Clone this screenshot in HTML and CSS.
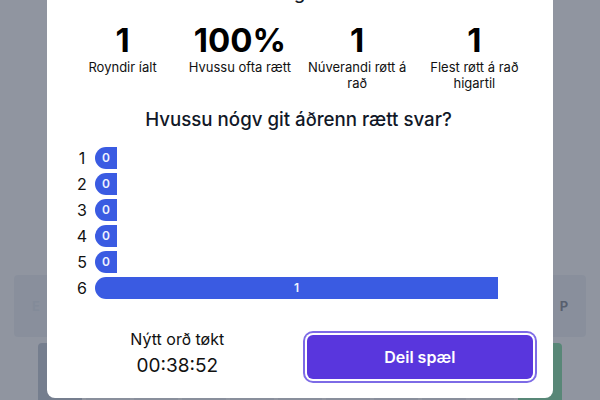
FILE: index.html
```html
<!DOCTYPE html>
<html lang="fo">
<head>
<meta charset="utf-8">
<meta name="viewport" content="width=device-width, initial-scale=1.0">
<title>Orðlið</title>
<link rel="stylesheet" href="styles.css">
</head>
<body>
<div class="keyboard">
  <div class="krow">
    <div class="key">E</div><div class="key">R</div><div class="key">T</div><div class="key">Y</div>
    <div class="key">U</div><div class="key">I</div><div class="key">O</div><div class="key">Ð</div>
    <div class="key">Á</div><div class="key">Í</div><div class="key">Ó</div><div class="key">P</div>
  </div>
  <div class="krow">
    <div class="key key-dark">A</div><div class="key">S</div><div class="key">D</div><div class="key">F</div>
    <div class="key">G</div><div class="key">H</div><div class="key">J</div><div class="key">K</div>
    <div class="key">L</div><div class="key">Æ</div><div class="key key-green">Ø</div>
  </div>
</div>

<div class="overlay">
  <div class="modal">
    <h3 class="title">Hagtøl</h3>

    <div class="stats">
      <div class="stat"><div class="stat-num">1</div><div class="stat-lbl">Royndir íalt</div></div>
      <div class="stat"><div class="stat-num">100%</div><div class="stat-lbl">Hvussu ofta rætt</div></div>
      <div class="stat"><div class="stat-num">1</div><div class="stat-lbl">Núverandi røtt á rað</div></div>
      <div class="stat"><div class="stat-num">1</div><div class="stat-lbl">Flest røtt á rað higartil</div></div>
    </div>

    <h4 class="subtitle">Hvussu nógv git áðrenn rætt svar?</h4>

    <div class="hist">
      <div class="hrow"><div class="hnum">1</div><div class="bar" style="width:22px">0</div></div>
      <div class="hrow"><div class="hnum">2</div><div class="bar" style="width:22px">0</div></div>
      <div class="hrow"><div class="hnum">3</div><div class="bar" style="width:22px">0</div></div>
      <div class="hrow"><div class="hnum">4</div><div class="bar" style="width:22px">0</div></div>
      <div class="hrow"><div class="hnum">5</div><div class="bar" style="width:22px">0</div></div>
      <div class="hrow"><div class="hnum">6</div><div class="bar" style="width:403px">1</div></div>
    </div>

    <div class="foot">
      <div class="next">
        <div class="next-lbl">Nýtt orð tøkt</div>
        <div class="next-time">00:38:52</div>
      </div>
      <button class="share">Deil spæl</button>
    </div>
  </div>
</div>
</body>
</html>
```

FILE: styles.css
```css
html, body {
  margin: 0;
  height: 400px;
  overflow: hidden;
  background: #fff;
  font-family: Inter, "Noto Sans", sans-serif;
  color: #111827;
}

/* keyboard behind the dialog */
.keyboard { padding-top: 275px; }
.krow {
  display: flex;
  justify-content: center;
  gap: 4px;
  margin-bottom: 6px;
}
.key {
  width: 44px;
  height: 62px;
  border-radius: 4px;
  background: #e2e8f0;
  color: #1e293b;
  font-size: 13px;
  font-weight: 700;
  display: flex;
  align-items: center;
  justify-content: center;
}
.key:first-child { color: #cbd5e1; }
.key-dark { background: #94a3b8; }
.key-green { background: #22c55e; color: #fff; }

/* dialog */
.overlay {
  position: fixed;
  inset: 0;
  background: rgba(107, 114, 128, 0.75);
  display: flex;
  justify-content: center;
  align-items: flex-start;
}
.modal {
  width: 506px;
  box-sizing: border-box;
  margin-top: -21px;
  padding: 0 20px 17px 17px;
  background: #fff;
  border-radius: 8px;
}
.title {
  margin: 0;
  font-size: 18px;
  line-height: 28px;
  font-weight: 500;
  text-align: center;
  color: #111827;
}

.stats { display: flex; margin-top: 15px; }
.stat { flex: 1; text-align: center; padding: 0 5px; }
.stat-num {
  font-size: 33px;
  line-height: 36px;
  font-weight: 700;
  color: #000;
}
.stat-lbl {
  margin-top: 1px;
  font-size: 13px;
  line-height: 16px;
  color: #111;
}

.subtitle {
  margin: 15px 0 0;
  font-size: 18.7px;
  line-height: 28px;
  font-weight: 500;
  text-align: center;
  color: #111827;
}

.hist {
  margin-top: 13px;
  display: flex;
  flex-direction: column;
  gap: 4px;
}
.hrow { display: flex; align-items: center; height: 22px; }
.hnum {
  width: 12px;
  margin-left: 12px;
  text-align: center;
  font-size: 16px;
  color: #111;
}
.bar {
  margin-left: 7px;
  height: 22px;
  line-height: 22px;
  border-radius: 11px 0 0 11px;
  background: #3a5be2;
  color: #eef2ff;
  font-size: 12px;
  font-weight: 600;
  text-align: center;
}

.foot {
  margin-top: 28px;
  display: grid;
  grid-template-columns: 1fr 1fr;
  column-gap: 16px;
  align-items: start;
}
.next { text-align: center; }
.next-lbl { font-size: 16px; line-height: 24px; color: #111; }
.next-time { font-size: 19px; line-height: 30px; font-weight: 400; color: #111; }
.share {
  margin-top: 8px;
  height: 44px;
  border: 0;
  border-radius: 6px;
  background: #5936dd;
  color: #fff;
  font-family: inherit;
  font-size: 16px;
  font-weight: 600;
  box-shadow: 0 0 0 2px #fff, 0 0 0 4px #7d6be6;
}
```
